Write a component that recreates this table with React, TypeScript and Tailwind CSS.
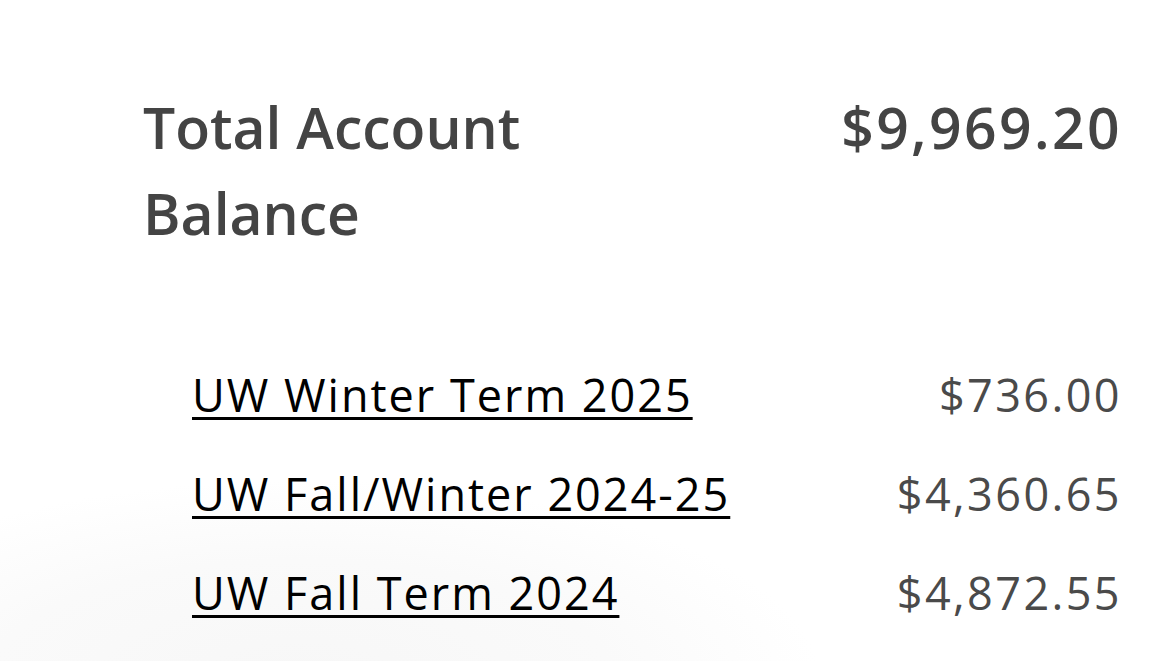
import React from 'react';

const terms = [
  { name: 'UW Winter Term 2025', amount: '$736.00' },
  { name: 'UW Fall/Winter 2024-25', amount: '$4,360.65' },
  { name: 'UW Fall Term 2024', amount: '$4,872.55' },
];

export default function App() {
  return (
    <div className="h-[661px] w-[1170px] overflow-hidden bg-white bg-[radial-gradient(ellipse_520px_200px_at_300px_680px,#f7f7f7_0%,#fafafa_60%,#ffffff_100%)] font-['Open_Sans','Liberation_Sans',sans-serif]">
      <div className="pl-[143px] pr-[50px] pt-[84px]">
        <div className="flex items-start justify-between">
          <h2 className="w-[430px] text-[57px] font-semibold leading-[86px] text-[#444444]">
            Total Account Balance
          </h2>
          <div className="-mr-[2px] text-[57px] font-semibold leading-[86px] tracking-[2.4px] text-[#444444]">
            $9,969.20
          </div>
        </div>

        <ul className="mt-[89px] pl-[49px]">
          {terms.map((t) => (
            <li key={t.name} className="flex h-[99px] items-start justify-between text-[45px] leading-[99px]">
              <a href="#" className="tracking-[2px] text-black underline decoration-[3px] underline-offset-[5px]">
                {t.name}
              </a>
              <span className="-mr-[2px] tracking-[2.4px] text-[#4a4a4a]">{t.amount}</span>
            </li>
          ))}
        </ul>
      </div>
    </div>
  );
}
